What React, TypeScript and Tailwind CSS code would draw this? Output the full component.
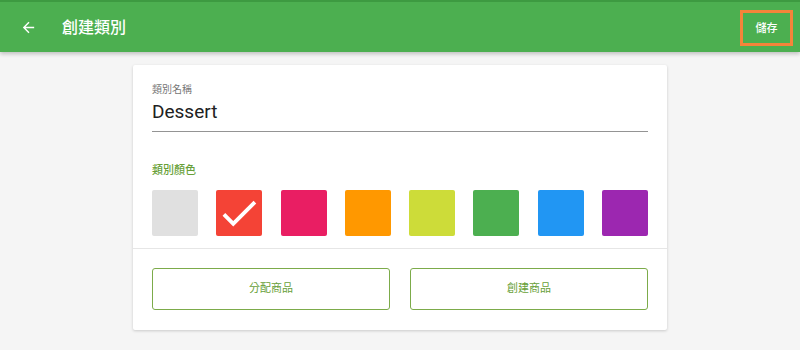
import React from "react";

const font = { fontFamily: "Roboto, 'Noto Sans CJK TC', sans-serif" };

const swatches = ["#e0e0e0", "#f44336", "#e91e63", "#ff9800", "#cddc39", "#4caf50", "#2196f3", "#9c27b0"];

export default function App() {
  return (
    <div className="w-[800px] h-[350px] bg-[#f5f5f5] overflow-hidden" style={font}>
      <div className="relative z-10 h-[52px] border-t-[2px] border-[#3d9a41] bg-[#4caf50] shadow-[0_2px_4px_rgba(0,0,0,0.22)] flex items-center">
        <div className="w-[17px] h-[17px] ml-[20px] mt-[1px] flex items-center">
          <svg viewBox="0 0 24 24" width="17" height="17" fill="#ffffff">
            <path d="M20 11H7.83l5.59-5.59L12 4l-8 8 8 8 1.41-1.41L7.83 13H20v-2z" />
          </svg>
        </div>
        <div className="ml-[25px] mt-[2px] text-[16px] leading-[20px] text-white font-medium">創建類別</div>
        <div className="ml-auto mr-[7px] mt-[2px] w-[53px] h-[36px] border-[3px] border-[#f5843a] flex items-center justify-center">
          <span className="text-[11px] leading-[14px] text-white font-medium mt-[1px]">儲存</span>
        </div>
      </div>
      <div className="mx-auto mt-[13px] w-[534px] bg-white rounded-[2px] shadow-[0_1px_3px_rgba(0,0,0,0.18)]">
        <div className="px-[19px] pt-[18px]">
          <div className="text-[10px] leading-[14px] text-[#757575]">類別名稱</div>
          <div className="mt-[1px] pb-[5px] border-b border-[#949494] text-[19px] leading-[28px] text-[#212121]">Dessert</div>
          <div className="mt-[31px] text-[11px] leading-[16px] text-[#689f38] font-medium">類別顏色</div>
          <div className="mt-[11px] flex justify-between">
            {swatches.map((c, i) => (
              <div key={i} className="w-[46px] h-[46px] rounded-[2px]" style={{ backgroundColor: c }}>
                {i === 1 && (
                  <svg viewBox="0 0 24 24" width="46" height="46" fill="#ffffff">
                    <path d="M9 16.17L4.83 12l-1.42 1.41L9 19 21 7l-1.41-1.41z" />
                  </svg>
                )}
              </div>
            ))}
          </div>
        </div>
        <div className="mt-[12px] border-t border-[#e6e6e6] px-[19px] pt-[19px] pb-[20px] flex gap-[20px]">
          <div className="flex-1 h-[42px] border border-[#7cab4a] rounded-[3px] flex items-center justify-center text-[11px] text-[#689f38]">分配商品</div>
          <div className="flex-1 h-[42px] border border-[#7cab4a] rounded-[3px] flex items-center justify-center text-[11px] text-[#689f38]">創建商品</div>
        </div>
      </div>
    </div>
  );
}
